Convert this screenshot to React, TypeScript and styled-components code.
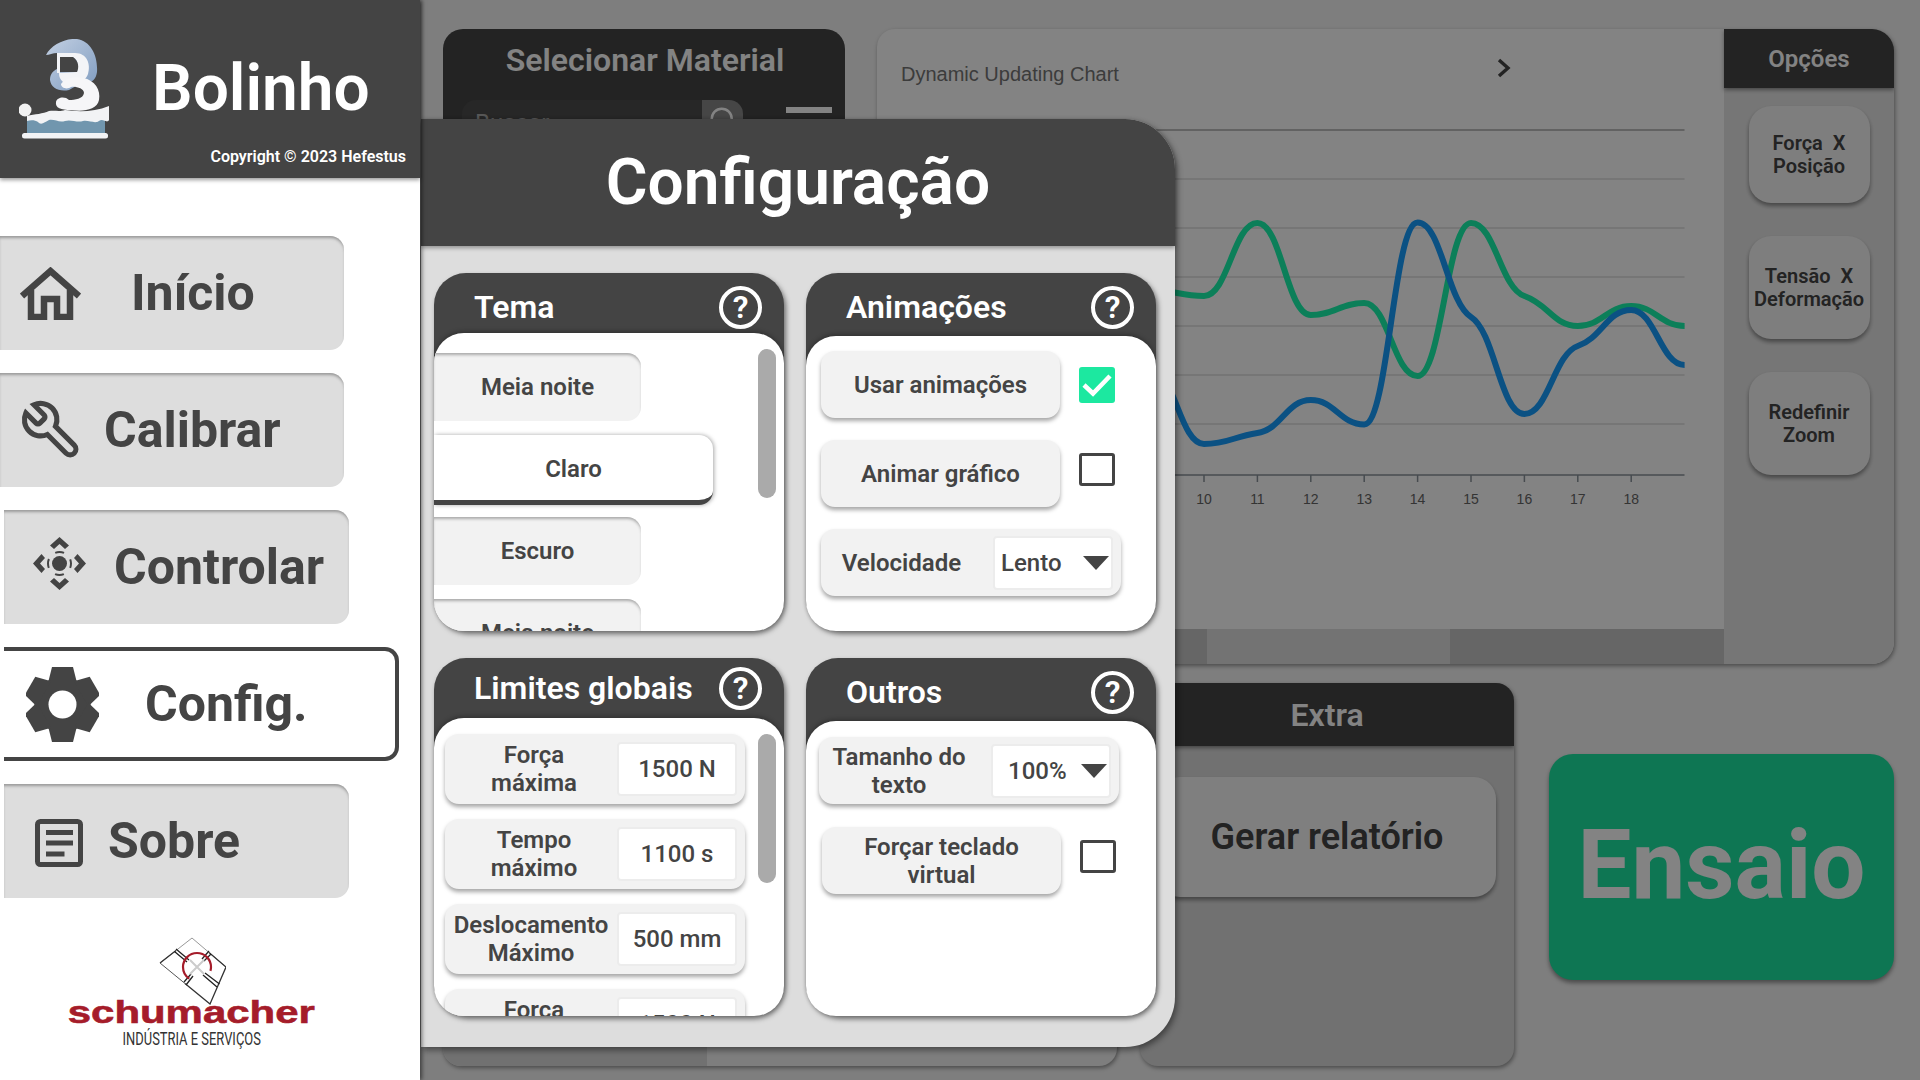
import React from 'react';
import styled, { createGlobalStyle } from 'styled-components';

const GlobalStyle = createGlobalStyle`
  html, body {
    margin: 0;
    height: 100%;
    overflow: hidden;
    background: #f5f5f5;
    font-family: Roboto, "Liberation Sans", sans-serif;
    color: #444;
  }
  * { box-sizing: border-box; }
  #root { height: 100%; }
`;

const Page = styled.div`
  position: relative;
  display: flex;
  width: 1920px;
  height: 1080px;
  overflow: hidden;
`;

/* ---------- sidebar ---------- */

const Sidebar = styled.aside`
  position: relative;
  z-index: 3;
  display: flex;
  flex-direction: column;
  flex: 0 0 420px;
  background: #fff;
  box-shadow: 2px 0 4px rgba(0, 0, 0, 0.5);
`;

const Brand = styled.header`
  display: flex;
  flex-direction: column;
  height: 178px;
  padding: 39px 14px 0 19px;
  background: #444;
  color: #fff;
  box-shadow: 0 2px 4px rgba(0, 0, 0, 0.4);
`;

const BrandRow = styled.div`
  display: flex;
  align-items: flex-start;
  gap: 41px;
  height: 108px;
`;

const BrandName = styled.div`
  margin-top: 14px;
  font-size: 64px;
  line-height: 72px;
  font-weight: 600;
`;

const Copyright = styled.div`
  align-self: flex-end;
  font-size: 16px;
  line-height: 20px;
  font-weight: 600;
`;

const Nav = styled.nav`
  display: flex;
  flex-direction: column;
  gap: 23px;
  margin-top: 58px;
`;

const NavItem = styled.div<{ $inset?: boolean; $active?: boolean; $iconLeft: number; $gap: number }>`
  display: flex;
  align-items: center;
  width: ${(p) => (p.$active ? 395 : p.$inset ? 345 : 344)}px;
  height: 114px;
  margin-left: ${(p) => (p.$inset ? 4 : 0)}px;
  padding-left: ${(p) => p.$iconLeft}px;
  gap: ${(p) => p.$gap}px;
  border-radius: 0 14px 14px 0;
  background: ${(p) => (p.$active ? '#fff' : '#ddd')};
  border: ${(p) => (p.$active ? '4px solid #444' : 'none')};
  border-left: none;
  box-shadow: ${(p) => (p.$active ? 'none' : 'inset 0 3px 3px -1px #999')};
  font-size: 50px;
  line-height: 60px;
  font-weight: 700;
  color: #444;
`;

const NavIcon = styled.span<{ $dy?: number }>`
  display: flex;
  margin-top: ${(p) => p.$dy ?? 0}px;
`;

const Footer = styled.div`
  display: flex;
  flex-direction: column;
  align-items: center;
  margin-top: 39px;
  padding-right: 37px;
`;

const Wordmark = styled.div`
  margin-top: -7px;
  font-family: "Liberation Sans", sans-serif;
  font-size: 32px;
  line-height: 28px;
  font-weight: 700;
  color: #a51c2a;
  -webkit-text-stroke: 0.6px #a51c2a;
  transform: scaleX(1.31);
`;

const Tagline = styled.div`
  margin-top: 3px;
  font-size: 19px;
  line-height: 20px;
  color: #333;
  white-space: nowrap;
  transform: scaleX(0.68);
`;

/* ---------- page behind the dialog ---------- */

const Main = styled.main`
  flex: 1;
  display: flex;
  flex-direction: column;
  gap: 19px;
  padding: 29px 27px 0 23px;
`;

const TopRow = styled.div`
  display: flex;
  gap: 32px;
  height: 635px;
`;

const BottomRow = styled.div`
  display: flex;
  gap: 23px;
  height: 383px;
`;

const MaterialPanel = styled.section`
  flex: 0 0 402px;
  border-radius: 20px 20px 0 0;
  background: #444;
  padding: 11px 13px 0 19px;
`;

const MaterialTitle = styled.h2`
  margin: 0 0 0 -4px;
  text-align: center;
  font-size: 32px;
  line-height: 40px;
  font-weight: 600;
  color: #fff;
`;

const SearchRow = styled.div`
  display: flex;
  align-items: flex-start;
  justify-content: space-between;
  margin-top: 20px;
`;

const SearchBox = styled.div`
  display: flex;
  width: 281px;
  height: 54px;
  border-radius: 14px;
  overflow: hidden;
  background: #4c4c4c;
`;

const SearchText = styled.div`
  flex: 1;
  padding: 9px 0 0 13px;
  font-size: 24px;
  color: #aaa;
`;

const SearchButton = styled.div`
  flex: 0 0 41px;
  display: flex;
  justify-content: center;
  padding-top: 5px;
  background: #888;
`;

const Burger = styled.div`
  display: flex;
  flex-direction: column;
  gap: 10px;
  width: 46px;
  margin-top: 7px;
`;

const BurgerBar = styled.span`
  height: 6px;
  background: #fff;
`;

const ChartCard = styled.section`
  flex: 1;
  display: flex;
  border-radius: 18px 22px 22px 18px;
  overflow: hidden;
  background: #fff;
  box-shadow: 1px 2px 4px rgba(0, 0, 0, 0.4);
`;

const ChartArea = styled.div`
  flex: 1;
  display: flex;
  flex-direction: column;
`;

const ChartHead = styled.div`
  display: flex;
  justify-content: space-between;
  height: 81px;
  padding: 33px 213px 0 24px;
  font-family: "Liberation Sans", sans-serif;
  font-size: 20px;
  line-height: 24px;
  color: #757575;
`;

const Chevron = styled.svg`
  margin-top: -4px;
`;

const Plot = styled.svg`
  display: block;
  width: 846px;
  height: 519px;
`;

const ZoomBar = styled.div`
  display: flex;
  height: 35px;
`;

const ZoomPart = styled.div<{ $w: number; $selected?: boolean }>`
  flex: ${(p) => (p.$w ? `0 0 ${p.$w}px` : '1')};
  background: ${(p) => (p.$selected ? '#e0e0e0' : '#c7c7c7')};
`;

const OptionsPanel = styled.aside`
  flex: 0 0 170px;
  display: flex;
  flex-direction: column;
  align-items: center;
  background: #e6e6e6;
`;

const DarkHead = styled.div<{ $h: number; $size: number }>`
  align-self: stretch;
  display: flex;
  align-items: center;
  justify-content: center;
  height: ${(p) => p.$h}px;
  background: #444;
  color: #fff;
  font-size: ${(p) => p.$size}px;
  font-weight: 600;
  box-shadow: 0 2px 4px rgba(0, 0, 0, 0.4);
`;

const OptionButton = styled.div<{ $h: number; $mt: number }>`
  display: flex;
  align-items: center;
  justify-content: center;
  width: 121px;
  height: ${(p) => p.$h}px;
  margin-top: ${(p) => p.$mt}px;
  border-radius: 22px;
  background: #f5f5f5;
  box-shadow: 0 3px 4px rgba(0, 0, 0, 0.4);
  text-align: center;
  white-space: pre-line;
  font-size: 20px;
  line-height: 23px;
  font-weight: 600;
`;

const ListPanel = styled.section`
  flex: 0 0 674px;
  display: flex;
  border-radius: 0 0 18px 18px;
  overflow: hidden;
  background: #f5f5f5;
  box-shadow: 1px 2px 4px rgba(0, 0, 0, 0.4);
`;

const ListSide = styled.div`
  flex: 0 0 264px;
  background: #ddd;
`;

const ExtraPanel = styled.section`
  flex: 0 0 374px;
  display: flex;
  flex-direction: column;
  align-items: center;
  border-radius: 18px;
  overflow: hidden;
  background: #ddd;
  box-shadow: 1px 2px 4px rgba(0, 0, 0, 0.4);
`;

const ReportButton = styled.div`
  display: flex;
  align-items: center;
  justify-content: center;
  width: 338px;
  height: 120px;
  margin-top: 31px;
  border-radius: 22px;
  background: #f8f8f8;
  box-shadow: 0 3px 4px rgba(0, 0, 0, 0.4);
  font-size: 36px;
  font-weight: 600;
`;

const StartButton = styled.div`
  display: flex;
  align-items: center;
  justify-content: center;
  flex: 0 0 345px;
  height: 226px;
  margin: 71px 0 0 12px;
  padding-bottom: 4px;
  border-radius: 24px;
  background: #1ce6a1;
  color: #fff;
  box-shadow: 0 3px 4px rgba(0, 0, 0, 0.4);
  font-size: 96px;
  font-weight: 700;
`;

const Backdrop = styled.div`
  position: absolute;
  inset: 0;
  z-index: 1;
  background: rgba(0, 0, 0, 0.487);
`;

/* ---------- dialog ---------- */

const Dialog = styled.div`
  position: absolute;
  left: 421px;
  top: 119px;
  z-index: 2;
  display: flex;
  flex-direction: column;
  width: 754px;
  height: 928px;
  border-radius: 0 50px 50px 0;
  background: #ddd;
  box-shadow: 2px 3px 6px rgba(0, 0, 0, 0.45);
`;

const DialogHead = styled.div`
  display: flex;
  align-items: center;
  justify-content: center;
  flex: 0 0 127px;
  border-radius: 0 50px 0 0;
  background: #444;
  color: #fff;
  box-shadow: 0 2px 4px rgba(0, 0, 0, 0.35);
  font-size: 64px;
  font-weight: 600;
`;

const CardGrid = styled.div`
  display: grid;
  grid-template-columns: 350px 350px;
  grid-template-rows: 358px 358px;
  column-gap: 22px;
  row-gap: 27px;
  padding: 27px 0 0 13px;
`;

const Card = styled.section`
  display: flex;
  flex-direction: column;
  border-radius: 32px;
  background: #444;
  box-shadow: 2px 3px 5px rgba(0, 0, 0, 0.5);
`;

const CardHead = styled.div<{ $h: number; $pt: number }>`
  display: flex;
  justify-content: space-between;
  flex: 0 0 ${(p) => p.$h}px;
  padding: ${(p) => p.$pt}px 22px 0 40px;
  color: #fff;
  font-size: 32px;
  line-height: 43px;
  font-weight: 600;
`;

const Help = styled.span`
  display: flex;
  align-items: center;
  justify-content: center;
  width: 43px;
  height: 43px;
  border: 4px solid #fff;
  border-radius: 50%;
  font-size: 32px;
  line-height: 35px;
  font-weight: 600;
`;

const CardBody = styled.div`
  position: relative;
  flex: 1;
  overflow: hidden;
  border-radius: 30px;
  background: #fff;
  box-shadow: 0 -2px 4px rgba(0, 0, 0, 0.25);
`;

const ThemeList = styled.div`
  display: flex;
  flex-direction: column;
  gap: 14px;
  padding-top: 20px;
`;

const ThemeItem = styled.div<{ $active?: boolean }>`
  display: flex;
  align-items: center;
  justify-content: center;
  flex: none;
  width: ${(p) => (p.$active ? 279 : 207)}px;
  height: ${(p) => (p.$active ? 70 : 68)}px;
  margin-bottom: ${(p) => (p.$active ? -2 : 0)}px;
  padding-top: ${(p) => (p.$active ? 2 : 0)}px;
  border-radius: 0 14px 14px 0;
  background: ${(p) => (p.$active ? '#fff' : '#f2f2f2')};
  border-bottom: ${(p) => (p.$active ? '5px solid #444' : 'none')};
  box-shadow: ${(p) =>
    p.$active ? '1px 0 4px rgba(0, 0, 0, 0.35)' : 'inset 0 3px 3px -1px #aaa'};
  font-size: 24px;
  font-weight: 600;
`;

const Scrollbar = styled.div<{ $top: number }>`
  position: absolute;
  top: ${(p) => p.$top}px;
  left: 324px;
  width: 18px;
  height: 149px;
  border-radius: 9px;
  background: #aaa;
`;

const Stack = styled.div<{ $pt: number; $pl: number; $gap: number }>`
  display: flex;
  flex-direction: column;
  gap: ${(p) => p.$gap}px;
  padding: ${(p) => p.$pt}px 0 0 ${(p) => p.$pl}px;
`;

const ToggleRow = styled.div<{ $ml?: number }>`
  display: flex;
  align-items: flex-start;
  gap: 19px;
  margin-left: ${(p) => p.$ml ?? 0}px;
`;

const ToggleLabel = styled.div`
  display: flex;
  align-items: center;
  justify-content: center;
  width: 239px;
  height: 67px;
  border-radius: 14px;
  background: #f2f2f2;
  box-shadow: 0 3px 4px rgba(0, 0, 0, 0.35);
  text-align: center;
  font-size: 24px;
  line-height: 28px;
  font-weight: 600;
`;

const CheckBox = styled.div<{ $checked?: boolean }>`
  display: flex;
  align-items: center;
  justify-content: center;
  width: 36px;
  height: ${(p) => (p.$checked ? 36 : 33)}px;
  margin-top: ${(p) => (p.$checked ? 16 : 13)}px;
  border-radius: 3px;
  background: ${(p) => (p.$checked ? '#1ce8a0' : '#fff')};
  border: ${(p) => (p.$checked ? 'none' : '3.5px solid #444')};
`;

const FieldRow = styled.div<{ $h: number }>`
  display: flex;
  align-items: center;
  justify-content: space-between;
  flex: none;
  width: 300px;
  height: ${(p) => p.$h}px;
  padding-right: 8px;
  border-radius: 14px;
  background: #f2f2f2;
  box-shadow: 0 3px 4px rgba(0, 0, 0, 0.35);
`;

const FieldLabel = styled.div<{ $pl?: number; $pr?: number }>`
  width: 172px;
  padding: 0 ${(p) => p.$pr ?? 0}px 0 ${(p) => p.$pl ?? 0}px;
  text-align: center;
  font-size: 24px;
  line-height: 28px;
  font-weight: 600;
  white-space: pre-line;
`;

const ValueBox = styled.div`
  display: flex;
  align-items: center;
  justify-content: center;
  width: 120px;
  height: 54px;
  border: 2px solid #ececec;
  border-radius: 4px;
  background: #fff;
  font-size: 24px;
  font-weight: 500;
`;

const SelectBox = styled.div<{ $pl: number }>`
  display: flex;
  align-items: center;
  justify-content: space-between;
  width: 120px;
  height: 54px;
  padding: 0 2px 0 ${(p) => p.$pl}px;
  border: 2px solid #ececec;
  border-radius: 4px;
  background: #fff;
  font-size: 24px;
  font-weight: 500;
`;

const Caret = styled.span`
  width: 0;
  height: 0;
  border-left: 13.5px solid transparent;
  border-right: 13.5px solid transparent;
  border-top: 14px solid #444;
`;

/* ---------- drawings ---------- */

const HomeIcon = () => (
  <svg width="61" height="53" viewBox="0 0 61 53" fill="none" stroke="#444" strokeWidth="6.5">
    <path d="M2 29 L30.5 4 L59 29" />
    <path d="M11 23 V50 H24 V32 H37 V50 H50 V23" />
  </svg>
);

const WrenchIcon = () => (
  <svg width="65" height="65" viewBox="0 0 24 24" fill="none" stroke="#444" strokeWidth="1.9" style={{ transform: 'scaleX(-1)' }}>
    <path d="M14.7 6.3a1 1 0 0 0 0 1.4l1.6 1.6a1 1 0 0 0 1.4 0l3.77-3.77a6 6 0 0 1-7.94 7.94l-6.91 6.91a2.12 2.12 0 0 1-3-3l6.91-6.91a6 6 0 0 1 7.94-7.94l-3.76 3.76z" />
  </svg>
);

const MoveIcon = () => (
  <svg width="53" height="53" viewBox="0 0 53 53" fill="#444">
    <circle cx="26.5" cy="26.5" r="7.5" />
    <circle cx="26.5" cy="26.5" r="11.5" fill="none" stroke="#444" strokeWidth="2" strokeDasharray="9 9" strokeDashoffset="4.5" />
    {[0, 90, 180, 270].map((a) => (
      <polygon key={a} points="26.5,0 36,8.5 32,12 26.5,7 21,12 17,8.5" transform={`rotate(${a} 26.5 26.5)`} />
    ))}
  </svg>
);

const GearIcon = () => (
  <svg width="73" height="75" viewBox="0 0 73 75" fill="#444">
    <circle cx="36.5" cy="37.5" r="28" />
    {[0, 60, 120, 180, 240, 300].map((a) => (
      <polygon key={a} points="26,0 47,0 51,16 22,16" transform={`rotate(${a} 36.5 37.5)`} />
    ))}
    <circle cx="36.5" cy="37.5" r="14" fill="#fff" />
  </svg>
);

const NotesIcon = () => (
  <svg width="48" height="48" viewBox="0 0 48 48" fill="none" stroke="#444" strokeWidth="5">
    <rect x="2.5" y="2.5" width="43" height="43" rx="3" />
    <path d="M11 13.5 H38 M11 24 H38" />
    <path d="M11 35 H29.5" />
  </svg>
);

const CheckMark = () => (
  <svg width="30" height="24" viewBox="0 0 30 24" fill="none" stroke="#fff" strokeWidth="4.5">
    <path d="M2 12 L11 20.5 L28 3" />
  </svg>
);

const CakeLogo = () => (
  <svg width="92" height="100" viewBox="20 19 92 100">
    <defs>
      <linearGradient id="backB" x1="0" y1="0" x2="1" y2="1">
        <stop offset="0" stopColor="#c3d0e3" />
        <stop offset="1" stopColor="#7f9cc0" />
      </linearGradient>
    </defs>
    <path
      d="M47 35 C52 25 66 18 78 19 C92 21 99 36 98 52 C97 60 92 64 84 62 L70 70 C60 72 52 68 51 60 C51 54 54 51 58 49 L58 33 C54 33 50 35 47 35 Z"
      fill="url(#backB)"
    />
    <path d="M58 33 H76 C88 33 92 44 89 54 C87 60 82 62 78 62 L64 62 C60 58 60 55 60 53 L78 52 C80 44 78 37 72 37 H61 V53 H58 Z" fill="#f3f4f7" />
    <path d="M61 37 H74 C80 41 80 48 78 52 H61 Z" fill="#444" />
    <path
      d="M62 64 C66 58 76 56 84 58 C96 60 102 70 100 80 C98 90 84 92 72 90 C62 90 56 88 57 82 C58 77 66 76 70 80 C76 80 84 79 85 73 C85 68 76 66 72 67 C68 70 62 68 62 64 Z"
      fill="#f6f6f8"
    />
    <rect x="28" y="98" width="78" height="15" fill="#7196ae" />
    <path
      d="M28 96 C36 94 44 94 50 91 C56 90 60 92 66 90 C80 92 95 92 110 86 V100 C108 104 104 98 100 101 C96 104 90 100 84 101 C78 103 72 99 66 101 C60 103 56 99 50 100 C46 102 42 106 39 102 C36 100 32 100 28 101 Z"
      fill="#f2f3f5"
    />
    <circle cx="26" cy="90" r="6.5" fill="#f2f2f2" />
    <rect x="23" y="113" width="86" height="5.5" rx="2.5" fill="#f2f3f5" />
  </svg>
);

const DiamondLogo = () => (
  <svg width="68" height="68" viewBox="159 936 68 68" fill="none">
    <path d="M193 937 L227 966 M161 962 L177 949.5 L193 937" stroke="#999" strokeWidth="1" />
    <path d="M161 962 L177 949.5 M210 951.5 L227 966 L219 984.5 M186 982.5 L211 1003 L219 984.5" stroke="#333" strokeWidth="1.3" />
    <path d="M161 962 L186 982.5" stroke="#555" strokeWidth="1" />
    <path d="M177 948 L190 959 M175.5 950.5 L188 961 M206 972 L220.5 983 M204 974 L218 986" stroke="#222" strokeWidth="1.3" />
    <path d="M210 950 L203 958 M212 953 L205 960 M192 973 L185 981 M194 975 L187 984" stroke="#222" strokeWidth="1.3" />
    <circle cx="198" cy="966" r="14" stroke="#a51c2a" strokeWidth="2.2" strokeDasharray="62 26" strokeDashoffset="-30" />
    <path d="M191 959 L205 973 M205 959 L191 973" stroke="#ccc" strokeWidth="2" />
  </svg>
);

const SearchGlyph = () => (
  <svg width="30" height="30" viewBox="0 0 24 24" fill="none" stroke="#fff" strokeWidth="2">
    <circle cx="11" cy="11" r="8" />
  </svg>
);

const ChevronGlyph = () => (
  <Chevron width="14" height="20" viewBox="0 0 14 20" fill="none" stroke="#444" strokeWidth="3.4">
    <path d="M2 2 L11 10 L2 18" />
  </Chevron>
);

/* ---------- chart data, in page pixels ---------- */

const tickX = (n: number) => 1204 + 53.4 * (n - 10);
const greenLine = [290, 296, 223, 315, 303, 376, 223, 296, 326, 306, 326];
const blueLine = [370, 444, 433, 400, 424.5, 222.5, 317, 414, 346, 310, 365];
const gridYs = [179, 228, 277, 326, 375, 424];
const ticks = [10, 11, 12, 13, 14, 15, 16, 17, 18];

// smooth line with flat tangents on peaks, like the chart lib draws it
function smoothPath(ys: number[]) {
  const step = 53.4;
  const slope = ys.map((y, i) => {
    const prev = ys[i - 1];
    const next = ys[i + 1];
    if (prev === undefined || next === undefined) return 0;
    if ((y - prev) * (next - y) <= 0) return 0;
    return ((next - prev) / (2 * step)) * 0.35;
  });
  let d = `M${tickX(9)} ${ys[0]}`;
  for (let i = 1; i < ys.length; i++) {
    const x0 = tickX(8 + i);
    const x1 = tickX(9 + i);
    const c = step * 0.45;
    d += ` C${x0 + c} ${ys[i - 1] + slope[i - 1] * c} ${x1 - c} ${ys[i] - slope[i] * c} ${x1} ${ys[i]}`;
  }
  return d;
}

const limits = [
  { label: 'Força\nmáxima', value: '1500 N', pl: 6 },
  { label: 'Tempo\nmáximo', value: '1100 s', pl: 6 },
  { label: 'Deslocamento\nMáximo', value: '500 mm', pl: 0 },
  { label: 'Força\nmínima', value: '1500 N', pl: 6 },
];

const CardTitle: React.FC<{ text: string }> = ({ text }) => (
  <>
    <span>{text}</span>
    <Help>?</Help>
  </>
);

export default function App() {
  return (
    <Page>
      <GlobalStyle />
      <Sidebar>
        <Brand>
          <BrandRow>
            <CakeLogo />
            <BrandName>Bolinho</BrandName>
          </BrandRow>
          <Copyright>Copyright © 2023 Hefestus</Copyright>
        </Brand>
        <Nav>
          <NavItem $iconLeft={20} $gap={50}>
            <NavIcon>
              <HomeIcon />
            </NavIcon>
            Início
          </NavItem>
          <NavItem $iconLeft={19} $gap={20}>
            <NavIcon>
              <WrenchIcon />
            </NavIcon>
            Calibrar
          </NavItem>
          <NavItem $inset $iconLeft={29} $gap={28}>
            <NavIcon $dy={-7}>
              <MoveIcon />
            </NavIcon>
            Controlar
          </NavItem>
          <NavItem $inset $active $iconLeft={22} $gap={46}>
            <NavIcon>
              <GearIcon />
            </NavIcon>
            Config.
          </NavItem>
          <NavItem $inset $iconLeft={31} $gap={25}>
            <NavIcon $dy={4}>
              <NotesIcon />
            </NavIcon>
            Sobre
          </NavItem>
        </Nav>
        <Footer>
          <DiamondLogo />
          <Wordmark>schumacher</Wordmark>
          <Tagline>INDÚSTRIA E SERVIÇOS</Tagline>
        </Footer>
      </Sidebar>

      <Main>
        <TopRow>
          <MaterialPanel>
            <MaterialTitle>Selecionar Material</MaterialTitle>
            <SearchRow>
              <SearchBox>
                <SearchText>Buscar</SearchText>
                <SearchButton>
                  <SearchGlyph />
                </SearchButton>
              </SearchBox>
              <Burger>
                <BurgerBar />
                <BurgerBar />
                <BurgerBar />
              </Burger>
            </SearchRow>
          </MaterialPanel>

          <ChartCard>
            <ChartArea>
              <ChartHead>
                <span>Dynamic Updating Chart</span>
                <ChevronGlyph />
              </ChartHead>
              <Plot viewBox="877 110 846 519">
                <line x1="905" x2="1684.5" y1="130" y2="130" stroke="#aaa" strokeWidth="1.5" />
                {gridYs.map((y) => (
                  <line key={y} x1="905" x2="1684.5" y1={y} y2={y} stroke="#dcdcdc" strokeWidth="1.5" />
                ))}
                <line x1="905" x2="1684.5" y1="475" y2="475" stroke="#8a939b" strokeWidth="1.5" />
                {ticks.map((n) => (
                  <g key={n}>
                    <line x1={tickX(n)} x2={tickX(n)} y1="475" y2="482" stroke="#8a939b" strokeWidth="1.5" />
                    <text x={tickX(n)} y="504" textAnchor="middle" fontSize="14" fontFamily="Liberation Sans, sans-serif" fill="#666">
                      {n}
                    </text>
                  </g>
                ))}
                <path d={smoothPath(greenLine)} fill="none" stroke="#18f8ae" strokeWidth="6" />
                <path d={smoothPath(blueLine)} fill="none" stroke="#169eff" strokeWidth="6" />
              </Plot>
              <ZoomBar>
                <ZoomPart $w={330} />
                <ZoomPart $w={243} $selected />
                <ZoomPart $w={0} />
              </ZoomBar>
            </ChartArea>
            <OptionsPanel>
              <DarkHead $h={59} $size={24}>Opções</DarkHead>
              <OptionButton $h={97} $mt={18}>{'Força\u00a0 X\nPosição'}</OptionButton>
              <OptionButton $h={103} $mt={33}>{'Tensão\u00a0 X\nDeformação'}</OptionButton>
              <OptionButton $h={103} $mt={33}>{'Redefinir\nZoom'}</OptionButton>
            </OptionsPanel>
          </ChartCard>
        </TopRow>

        <BottomRow>
          <ListPanel>
            <ListSide />
          </ListPanel>
          <ExtraPanel>
            <DarkHead $h={63} $size={32}>Extra</DarkHead>
            <ReportButton>Gerar relatório</ReportButton>
          </ExtraPanel>
          <StartButton>Ensaio</StartButton>
        </BottomRow>
      </Main>

      <Backdrop />

      <Dialog>
        <DialogHead>Configuração</DialogHead>
        <CardGrid>
          <Card>
            <CardHead $h={60} $pt={13}>
              <CardTitle text="Tema" />
            </CardHead>
            <CardBody>
              <ThemeList>
                <ThemeItem>Meia noite</ThemeItem>
                <ThemeItem $active>Claro</ThemeItem>
                <ThemeItem>Escuro</ThemeItem>
                <ThemeItem>Meia noite</ThemeItem>
              </ThemeList>
              <Scrollbar $top={16} />
            </CardBody>
          </Card>

          <Card>
            <CardHead $h={63} $pt={13}>
              <CardTitle text="Animações" />
            </CardHead>
            <CardBody>
              <Stack $pt={15} $pl={15} $gap={22}>
                <ToggleRow>
                  <ToggleLabel>Usar animações</ToggleLabel>
                  <CheckBox $checked>
                    <CheckMark />
                  </CheckBox>
                </ToggleRow>
                <ToggleRow>
                  <ToggleLabel>Animar gráfico</ToggleLabel>
                  <CheckBox />
                </ToggleRow>
                <FieldRow $h={67}>
                  <FieldLabel $pr={11}>Velocidade</FieldLabel>
                  <SelectBox $pl={6}>
                    Lento
                    <Caret />
                  </SelectBox>
                </FieldRow>
              </Stack>
            </CardBody>
          </Card>

          <Card>
            <CardHead $h={60} $pt={9}>
              <CardTitle text="Limites globais" />
            </CardHead>
            <CardBody>
              <Stack $pt={16} $pl={11} $gap={15}>
                {limits.map((row, i) => (
                  <FieldRow key={i} $h={70}>
                    <FieldLabel $pl={row.pl}>{row.label}</FieldLabel>
                    <ValueBox>{row.value}</ValueBox>
                  </FieldRow>
                ))}
              </Stack>
              <Scrollbar $top={16} />
            </CardBody>
          </Card>

          <Card>
            <CardHead $h={63} $pt={13}>
              <CardTitle text="Outros" />
            </CardHead>
            <CardBody>
              <Stack $pt={16} $pl={13} $gap={23}>
                <FieldRow $h={67}>
                  <FieldLabel $pr={12}>{'Tamanho do\ntexto'}</FieldLabel>
                  <SelectBox $pl={15}>
                    100%
                    <Caret />
                  </SelectBox>
                </FieldRow>
                <ToggleRow $ml={3}>
                  <ToggleLabel>
                    Forçar teclado
                    <br />
                    virtual
                  </ToggleLabel>
                  <CheckBox />
                </ToggleRow>
              </Stack>
            </CardBody>
          </Card>
        </CardGrid>
      </Dialog>
    </Page>
  );
}
